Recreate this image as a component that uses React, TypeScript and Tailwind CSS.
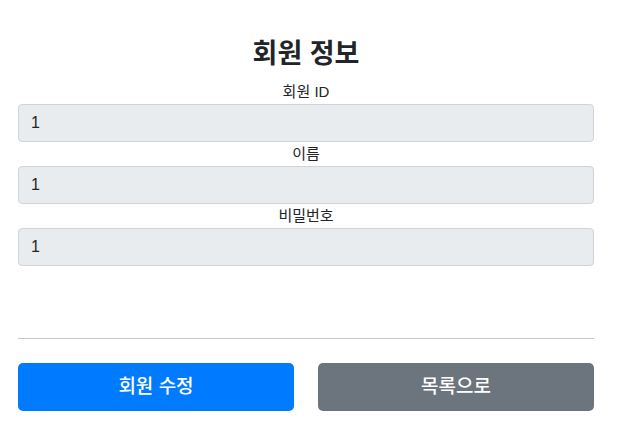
export default function App() {
  const fields = [
    { label: "회원 ID", value: "1" },
    { label: "이름", value: "1" },
    { label: "비밀번호", value: "1" },
  ];
  return (
    <div
      className="w-[619px] h-[436px] bg-white text-[#212529]"
      style={{ fontFamily: '"Liberation Sans", "Noto Sans CJK KR", sans-serif' }}
    >
      <div className="ml-[18px] w-[576px] pt-[39px] flex flex-col">
        <h2 className="text-center text-[27px] font-semibold leading-[31px] mb-[10px]">회원 정보</h2>
        {fields.map((f) => (
          <div key={f.label} className="flex flex-col">
            <div className="text-center text-[15px] leading-[24px]">{f.label}</div>
            <div className="h-[38px] bg-[#e9ecef] border border-[#ced4da] rounded-[4px] px-[12px] flex items-center text-[16px]">
              {f.value}
            </div>
          </div>
        ))}
        <div className="mt-[72px] h-px bg-[#c8c8c8]" />
        <div className="mt-[24px] grid grid-cols-2 gap-[24px]">
          <button className="h-[48px] rounded-[5px] bg-[#007bff] text-white text-[19px] font-medium flex items-center justify-center">
            회원 수정
          </button>
          <button className="h-[48px] rounded-[5px] bg-[#6c757d] text-white text-[19px] font-medium flex items-center justify-center">
            목록으로
          </button>
        </div>
      </div>
    </div>
  );
}
